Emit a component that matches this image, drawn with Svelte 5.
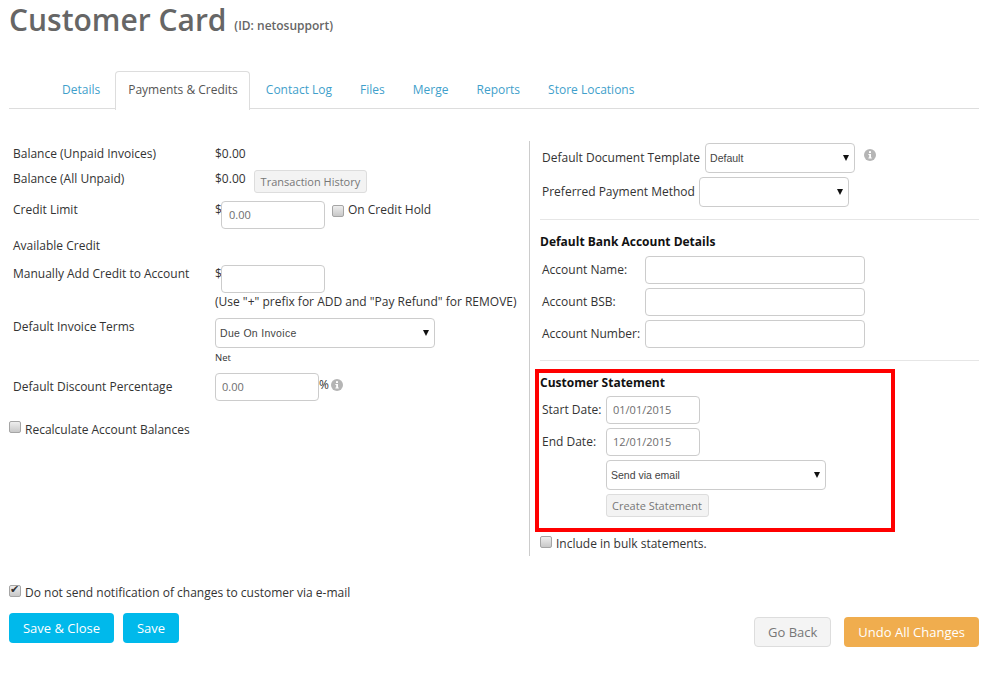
<script>
  const tabs = ['Details', 'Payments & Credits', 'Contact Log', 'Files', 'Merge', 'Reports', 'Store Locations'];
</script>

{#snippet info(cls)}
  <svg class="info {cls}" width="12" height="12" viewBox="0 0 12 12" aria-hidden="true">
    <circle cx="6" cy="6" r="6" fill="#b5b5b5" />
    <rect x="5" y="2.2" width="2" height="1.8" fill="#fff" />
    <path d="M4.4 5h2.6v3.6h.8v1H4.4v-1h.8V6h-.8z" fill="#fff" />
  </svg>
{/snippet}

<div class="page">
  <h1>Customer Card <small>(ID: netosupport)</small></h1>

  <ul class="tabs">
    {#each tabs as t, i}
      <li class:active={i === 1}>{t}</li>
    {/each}
  </ul>

  <div class="columns">
    <div class="left">
      <div class="row r1"><span class="lab">Balance (Unpaid Invoices)</span><span class="val">$0.00</span></div>
      <div class="row r2">
        <span class="lab">Balance (All Unpaid)</span>
        <span class="val">$0.00</span>
        <button class="btn-grey tx">Transaction History</button>
      </div>
      <div class="row r3">
        <span class="lab">Credit Limit</span>
        <span class="val dollar">$</span>
        <input class="field w104" value="0.00" />
        <label class="check hold"><input type="checkbox" /> On Credit Hold</label>
      </div>
      <div class="row r4"><span class="lab">Available Credit</span></div>
      <div class="row r5">
        <span class="lab">Manually Add Credit to Account</span>
        <span class="val dollar">$</span>
        <input class="field w104" />
      </div>
      <div class="row r6"><span class="lab"></span><span class="val">(Use "+" prefix for ADD and "Pay Refund" for REMOVE)</span></div>
      <div class="row r7">
        <span class="lab">Default Invoice Terms</span>
        <div class="sel w220"><select><option>Due On Invoice</option></select></div>
      </div>
      <div class="row r8"><span class="lab"></span><span class="net">Net</span></div>
      <div class="row r9">
        <span class="lab">Default Discount Percentage</span>
        <input class="field w104" value="0.00" />
        <span class="val pct">%</span>
        {@render info('pct-info')}
      </div>
      <label class="check recalc"><input type="checkbox" /> Recalculate Account Balances</label>
    </div>

    <div class="right">
      <div class="line l1">
        <span class="rlab">Default Document Template</span>
        <div class="sel w150"><select><option>Default</option></select></div>
        {@render info('doc-info')}
      </div>
      <div class="line l2">
        <span class="rlab">Preferred Payment Method</span>
        <div class="sel w150"><select><option></option></select></div>
      </div>
      <hr class="hr1" />
      <h4 class="bank">Default Bank Account Details</h4>
      <div class="form">
        <div class="frow"><span class="flab">Account Name:</span><input class="field w220" /></div>
        <div class="frow"><span class="flab">Account BSB:</span><input class="field w220" /></div>
        <div class="frow"><span class="flab">Account Number:</span><input class="field w220" /></div>
      </div>
      <hr class="hr2" />
      <div class="box">
        <h4>Customer Statement</h4>
        <div class="drow"><span class="dlab">Start Date:</span><input class="field w94" value="01/01/2015" /></div>
        <div class="drow"><span class="dlab">End Date:</span><input class="field w94" value="12/01/2015" /></div>
        <div class="indent"><div class="sel w220"><select><option>Send via email</option></select></div></div>
        <div class="indent"><button class="btn-grey create">Create Statement</button></div>
      </div>
      <label class="check bulk"><input type="checkbox" /> Include in bulk statements.</label>
    </div>
  </div>

  <label class="check notify"><input type="checkbox" checked /> Do not send notification of changes to customer via e-mail</label>

  <div class="actions">
    <div class="group">
      <button class="btn blue w105">Save &amp; Close</button>
      <button class="btn blue w56">Save</button>
    </div>
    <div class="group second">
      <button class="btn back">Go Back</button>
      <button class="btn orange">Undo All Changes</button>
    </div>
  </div>
</div>

<style>
  :global(body) { margin: 0; background: #fff; }
  .page {
    width: 970px;
    height: 678px;
    padding-left: 9px;
    font-family: "Open Sans", sans-serif;
    font-size: 12px;
    line-height: 20px;
    color: #333;
    overflow: hidden;
  }
  h1 {
    margin: 0;
    height: 71px;
    font-size: 30px;
    line-height: 39px;
    font-weight: 600;
    color: #666;
  }
  h1 small { font-size: 12px; font-weight: 600; position: relative; top: -1px; }
  .tabs {
    display: flex;
    list-style: none;
    margin: 0 0 32px;
    padding: 0 0 0 40px;
    height: 37px;
    border-bottom: 1px solid #ddd;
  }
  .tabs li {
    padding: 0 12px;
    margin-right: 2px;
    height: 37px;
    line-height: 35px;
    border: 1px solid transparent;
    border-bottom: none;
    color: #3f9fcb;
  }
  .tabs li.active {
    color: #555;
    background: #fff;
    border-color: #ddd;
    border-radius: 4px 4px 0 0;
    height: 38px;
    padding-right: 11px;
    margin-right: 3px;
  }
  .columns { display: grid; grid-template-columns: 520px 450px; height: 415px; }

  .left { padding: 3px 0 0 4px; }
  .row { display: flex; align-items: flex-start; }
  .lab { width: 202px; flex: none; }
  .r1 { height: 25px; }
  .r2 { height: 31px; }
  .r3 { height: 36px; }
  .r4 { height: 28px; }
  .r5 { height: 28px; }
  .r6 { height: 25px; }
  .r7 { height: 33px; }
  .r8 { height: 22px; }
  .r9 { height: 48px; }
  .r3 .field, .r5 .field, .r7 .sel, .r9 .field { margin-top: 1px; }
  .r7 select { letter-spacing: 0.3px; }
  .r8 .net { font-size: 9.5px; line-height: 16px; }
  .r9 .lab { margin-top: 5px; }
  .dollar { width: 6px; flex: none; }
  .tx { margin: 1px 0 0 8px; }
  .hold { margin-left: 7px; }
  .check.hold input { margin-top: 2px; }
  .val.pct { margin-top: 3px; }
  .pct-info { margin: 7px 0 0 2px; }
  .recalc { margin-left: -4px; }

  .field {
    box-sizing: border-box;
    height: 28px;
    border: 1px solid #ccc;
    border-radius: 4px;
    padding: 0 6px 2px 7px;
    background: #fff;
    font: 11px "Open Sans", sans-serif;
    color: #6e6e6e;
    display: block;
    outline: none;
  }
  .box .field { padding-left: 6px; }
  .r9 .field { padding-left: 6px; }
  .w104 { width: 104px; }
  .w220 { width: 220px; }
  .w94 { width: 94px; }
  .w150 { width: 150px; }

  .sel { position: relative; height: 30px; flex: none; }
  .sel select {
    appearance: none;
    box-sizing: border-box;
    width: 100%;
    height: 30px;
    border: 1px solid #ccc;
    border-radius: 4px;
    background: #fff;
    padding: 0 4px;
    font: 10.5px "Liberation Sans", sans-serif;
    color: #444;
    outline: none;
  }
  .sel::after {
    content: "";
    position: absolute;
    right: 6px;
    top: 12px;
    border-style: solid;
    border-width: 6px 3.5px 0;
    border-color: #111 transparent transparent;
  }

  .btn-grey {
    box-sizing: border-box;
    height: 23px;
    padding: 0 6px;
    border: 1px solid #ddd;
    border-radius: 3px;
    background: #f3f3f3;
    font: 11px "Open Sans", sans-serif;
    color: #777;
    display: block;
  }
  .create { padding-left: 5px; }

  .check { display: flex; align-items: center; gap: 4px; }
  .check input {
    appearance: none;
    box-sizing: border-box;
    width: 12px;
    height: 12px;
    margin: -6px 0 0;
    border: 1px solid #a5a5a5;
    border-radius: 2px;
    background: linear-gradient(#eee, #c8c8c8);
    position: relative;
    flex: none;
  }
  .check input:checked::after {
    content: "✔";
    position: absolute;
    left: 0;
    top: -3px;
    font: 11px/14px "DejaVu Sans", sans-serif;
    color: #333;
  }

  .right {
    border-left: 1px solid #ccc;
    padding-left: 10px;
    box-sizing: border-box;
    height: 415px;
  }
  .line { display: flex; align-items: center; padding-left: 2px; height: 30px; }
  .l1 { margin-top: 2px; }
  .l2 { margin-top: 4px; }
  .rlab { margin-right: 5px; }
  .l2 .rlab { margin-right: 4px; }
  .doc-info { margin: -6px 0 0 9px; }
  .right hr { border: 0; border-top: 1px solid #e6e6e6; margin: 0; }
  .right .hr1 { margin-top: 12px; }
  .right .hr2 { margin-top: 12px; }
  h4 { margin: 0; font-size: 12px; font-weight: 700; color: #111; line-height: 20px; }
  .bank { margin-top: 12px; margin-bottom: 4px; }
  .frow { display: flex; align-items: center; height: 28px; margin-bottom: 4px; padding-left: 2px; }
  .flab { width: 103px; }
  .box {
    box-sizing: border-box;
    width: 360px;
    height: 163px;
    margin: 8px 0 0 -5px;
    padding-left: 1px;
    border: 4px solid #f00;
  }
  .box h4 { margin-bottom: 3px; }
  .drow { display: flex; align-items: center; height: 28px; margin-bottom: 4px; padding-left: 2px; }
  .dlab { width: 64px; }
  .indent { padding-left: 66px; margin-bottom: 4px; }
  .bulk { margin-top: 2px; }
  .check.bulk input, .check.notify input { margin-top: -4px; }

  .notify { margin-top: 27px; }
  .actions { display: flex; justify-content: space-between; margin-top: 10px; }
  .group { display: flex; gap: 9px; }
  .second { margin-top: 4px; gap: 13px; }
  .btn {
    box-sizing: border-box;
    height: 30px;
    border: 1px solid transparent;
    border-radius: 4px;
    font: 13px "Open Sans", sans-serif;
    color: #fff;
    padding: 0 13px;
  }
  .blue { background: #00b9eb; padding: 0; }
  .w105 { width: 105px; }
  .w56 { width: 56px; }
  .back { background: #f4f4f4; border-color: #ddd; color: #777; }
  .orange { background: #f0ad4e; }
</style>
